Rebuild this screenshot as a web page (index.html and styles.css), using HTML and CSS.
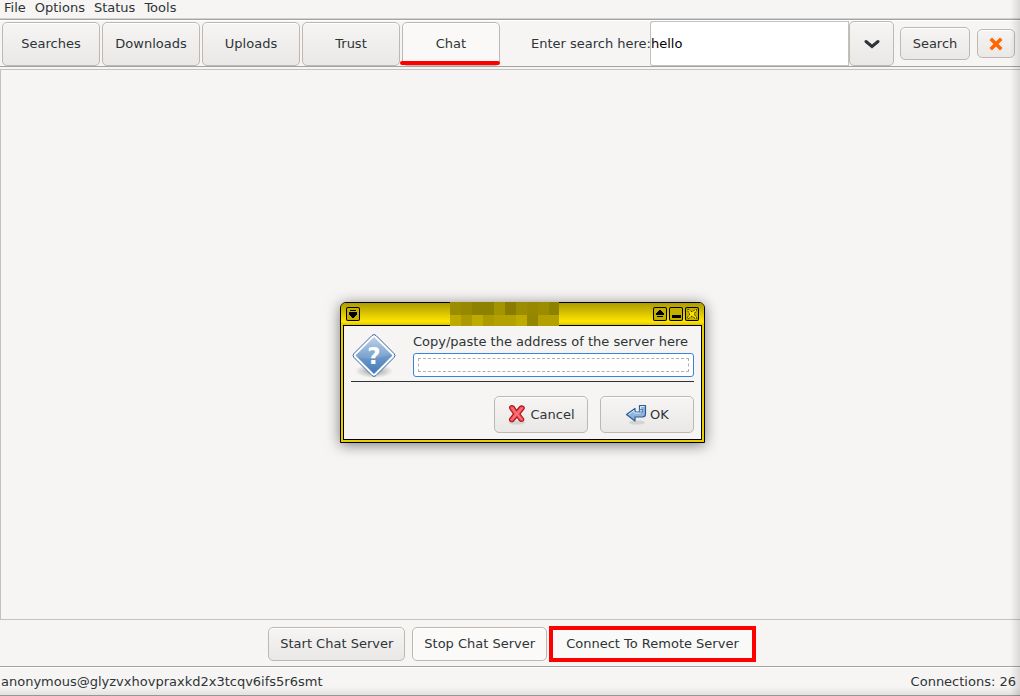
FILE: index.html
```html
<!DOCTYPE html>
<html lang="en">
<head>
<meta charset="utf-8">
<title>Chat</title>
<link rel="stylesheet" href="styles.css">
</head>
<body>
<div class="app">
  <nav class="menubar">
    <button class="menu">File</button>
    <button class="menu">Options</button>
    <button class="menu">Status</button>
    <button class="menu">Tools</button>
  </nav>
  <header class="toolbar">
    <div class="tabs">
      <button class="btn tab">Searches</button>
      <button class="btn tab">Downloads</button>
      <button class="btn tab">Uploads</button>
      <button class="btn tab">Trust</button>
      <button class="btn tab active">Chat</button>
    </div>
    <div class="search">
      <label for="query">Enter search here:</label>
      <input class="query" id="query" type="text" value="hello">
      <button class="btn drop" aria-label="Search history">
        <svg width="16" height="16" viewBox="0 0 16 16"><path d="M2 5.500l6 5 6-5" fill="none" stroke="#2e3436" stroke-width="3" stroke-linecap="round"/></svg>
      </button>
      <button class="btn go">Search</button>
      <button class="btn stop" aria-label="Stop search">
        <svg width="14" height="14" viewBox="0 0 14 14"><path d="M3 3l8 8M11 3l-8 8" stroke="#ff6600" stroke-width="3.600" stroke-linecap="square"/></svg>
      </button>
    </div>
  </header>
  <main class="panel"></main>
  <div class="actions">
    <button class="btn action">Start Chat Server</button>
    <button class="btn action flat">Stop Chat Server</button>
    <button class="btn action marked">Connect To Remote Server</button>
  </div>
  <footer class="statusbar">
    <span>anonymous@glyzvxhovpraxkd2x3tcqv6ifs5r6smt</span>
    <span>Connections: 26</span>
  </footer>

  <div class="dialog" role="dialog" aria-labelledby="prompt">
    <div class="titlebar">
      <button class="win" aria-label="Window menu"><svg width="14" height="14" viewBox="0 0 14 14"><path d="M4 3h6v1H4zM3 5h8v3H3zM4 8h6v1H4zM5 9h4v1H5zM6 10h2v1H6z"/></svg></button>
      <svg class="mosaic" width="109" height="24" viewBox="0 0 109 24" shape-rendering="crispEdges">
        <path d="M0 0h109v13H0z" fill="#978800"/><path d="M0 13h109v11H0z" fill="#b2a100"/>
        <path d="M0 0h11v13H0zM66 0h11v13H66zM88 0h11v13H88z" fill="#9b8c00"/>
        <path d="M22 0h22v13H22zM99 0h10v13H99z" fill="#8f8100"/>
        <path d="M44 0h11v13H44z" fill="#a39400"/><path d="M55 0h11v13H55z" fill="#8a7c00"/>
        <path d="M11 13h11v11H11zM33 13h11v11H33z" fill="#ab9a00"/><path d="M0 13h11v11H0zM22 13h11v11H22zM66 13h11v11H66z" fill="#bdab00"/>
        <path d="M77 13h11v11H77z" fill="#958600"/>
      </svg>
      <div class="wins">
        <button class="win" aria-label="Shade"><svg width="14" height="14" viewBox="0 0 14 14"><path d="M6 3h2v1H6zM5 4h4v1H5zM4 5h6v1H4zM3 6h8v2H3zM4 9h6v1H4z"/></svg></button>
        <button class="win" aria-label="Minimize"><svg width="14" height="14" viewBox="0 0 14 14"><path d="M3 8h9v3H3z"/></svg></button>
        <button class="win" aria-label="Close"><svg width="14" height="14" viewBox="0 0 14 14"><path d="M3 2l4 3 4-3 1 1-3 4 3 4-1 1-4-3-4 3-1-1 3-4-3-4z" fill="#ffe500" stroke="#000" stroke-width="1" stroke-dasharray="1 1"/></svg></button>
      </div>
    </div>
    <div class="body">
      <div class="question">
        <svg width="44" height="46" viewBox="0 1 44 46">
          <defs>
            <linearGradient id="blue" x1="0" y1="0" x2="0" y2="1"><stop offset="0" stop-color="#b4cbe5"/><stop offset=".5" stop-color="#6f9acb"/><stop offset="1" stop-color="#4479b7"/></linearGradient>
            <radialGradient id="shade"><stop offset="0" stop-color="#999"/><stop offset="1" stop-color="#999" stop-opacity="0"/></radialGradient>
          </defs>
          <ellipse cx="22" cy="38" rx="19" ry="7" fill="url(#shade)"/>
          <path d="M20 2.500q2-2 4 0L42 20.500q2 2 0 4L24 42.500q-2 2-4 0L2 24.500q-2-2 0-4z" fill="#fff" stroke="#3465a4" stroke-width="1"/>
          <path d="M22 4L40.500 22.500 22 41 3.500 22.500z" fill="url(#blue)"/>
          <path d="M5 24Q22 28 39 21L22 4 3.500 22.500z" fill="#fff" opacity=".12"/>
          <text class="mark" x="22" y="31" text-anchor="middle">?</text>
        </svg>
        <div class="field">
          <label id="prompt" for="address">Copy/paste the address of the server here</label>
          <div class="address-frame"><input class="address" id="address" type="text"></div>
        </div>
      </div>
      <div class="buttons">
        <button class="btn reply">
          <svg width="20" height="22" viewBox="0 0 20 22"><ellipse cx="10" cy="18.500" rx="8" ry="2" fill="#aaa" opacity=".35"/><path d="M3.500 2Q5 1 7 2.500L9.500 6.500l3.500-4Q14.500 1 17 3q.8 1-.2 2.200L13 10l3.500 4.500q.8 1.500-.5 2.500-2 1-3.500-.5L10 13l-3.500 4Q5 18.500 3 17q-1-1-.2-2.500L6.500 10 3 5Q2 3 3.500 2z" fill="#f35c62" stroke="#b3121b" stroke-width="1.200"/><path d="M5 4l9.500 11.500M15 4L5 15.500" stroke="#ff8585" stroke-width="1" fill="none"/></svg>
          Cancel
        </button>
        <button class="btn reply">
          <svg width="22" height="22" viewBox="0 0 22 22"><ellipse cx="12" cy="18.500" rx="8" ry="2" fill="#aaa" opacity=".35"/><path d="M14.500 1.500h6v8.500q0 3-3 3h-7.500v4L1.500 10.500l8.500-6v3.500h4.500z" fill="#8fb4dc" stroke="#2b5c98" stroke-width="1.200" stroke-linejoin="round"/><path d="M3.500 10.500l5.500-4v2.500h6.500V2.500h4" fill="none" stroke="#dbe8f6" stroke-width="1"/><path d="M14.500 5.500h3v2.500h-3z" fill="#c5d8ed" stroke="#3f70ab" stroke-width=".8"/></svg>
          OK
        </button>
      </div>
    </div>
  </div>
</div>
</body>
</html>
```
FILE: styles.css
```css
* { box-sizing: border-box; }
body { margin: 0; }
button, input { font: inherit; color: inherit; margin: 0; }
svg { display: block; flex: none; }
.app {
  position: relative;
  display: flex;
  flex-direction: column;
  min-height: 100vh;
  overflow: hidden;
  background: #f6f5f4;
  color: #2e3436;
  font: 13px/16px "DejaVu Sans", sans-serif;
}
.app::after {
  content: "";
  position: absolute;
  inset: 0 0 0 auto;
  width: 10px;
  background: linear-gradient(to right, transparent, rgba(0, 0, 0, .12));
  pointer-events: none;
}
.menubar {
  display: flex;
  gap: 9px;
  padding: 0 4px 3px;
  height: 20px;
  border-bottom: 1px solid #a3a3a3;
  box-shadow: inset 0 -1px #d4d2d0;
}
.menu { border: 0; padding: 0; background: none; }
.btn {
  display: flex;
  align-items: center;
  justify-content: center;
  padding: 0;
  border: 1px solid #bfb8b1;
  border-radius: 5px;
  background: linear-gradient(#f6f5f4, #e9e8e7);
  box-shadow: inset 0 1px #fff;
  white-space: nowrap;
}
.toolbar {
  display: flex;
  justify-content: space-between;
  align-items: flex-end;
  height: 47px;
  padding: 1px 5px 0 2px;
  border-bottom: 1px solid #a3a3a3;
  box-shadow: inset 0 1px #fff;
}
.tabs { display: flex; gap: 2px; }
.tab { width: 98px; height: 44px; }
.active { position: relative; background: #faf9f8; }
.active::after {
  content: "";
  position: absolute;
  left: -3px;
  right: -1px;
  bottom: 0;
  height: 4px;
  border-radius: 2px;
  background: #f00;
}
.search { display: flex; align-items: center; }
.query {
  width: 198px;
  height: 45px;
  padding: 0;
  border: 1px solid #c4c0bc;
  border-left-width: 0;
  box-shadow: -1px 0 #c4c0bc;
  border-radius: 3px 0 0 3px;
  background: #fff;
  color: #000;
}
.drop { width: 45px; height: 45px; margin-right: 6px; }
.go { width: 70px; height: 33px; margin-right: 7px; }
.stop { width: 38px; height: 29px; }
.panel {
  flex: 1;
  margin-top: 2px;
  border: 1px solid #c4c2bf;
  border-right: 0;
}
.actions {
  display: flex;
  justify-content: center;
  align-items: center;
  gap: 7px;
  padding: 6px 0 4px 4px;
}
.action { height: 34px; padding: 0 11px; }
.flat { background: #fbfaf9; }
.marked {
  height: 36px;
  margin-left: -5px;
  padding: 0 13px;
  border: 4px solid #f00;
  border-radius: 0;
  background: #f9f9f8;
}
.statusbar {
  display: flex;
  justify-content: space-between;
  align-items: center;
  height: 30px;
  padding: 1px 4px 0 1px;
  border-top: 1px solid #a3a3a3;
  border-bottom: 1px solid #969696;
  background: linear-gradient(#f6f5f4 70%, #e2e1e0);
  box-shadow: inset 0 1px #fff;
}
.dialog {
  position: absolute;
  left: 340px;
  top: 302px;
  width: 365px;
  padding: 0 2px 2px;
  border: 1px solid #000;
  border-radius: 6px 6px 0 0;
  background: #e8d000;
  box-shadow: 0 2px 14px rgba(0, 0, 0, .5);
}
.titlebar {
  position: relative;
  display: flex;
  justify-content: space-between;
  align-items: center;
  height: 22px;
  margin: 0 -2px;
  padding: 0 5px;
  border-radius: 5px 5px 0 0;
  background: linear-gradient(#ad9b00, #ffe600 85%, #d9c300);
}
.mosaic { position: absolute; left: 109px; top: -1px; }
.wins { display: flex; gap: 2px; }
.win {
  width: 14px;
  height: 14px;
  padding: 0;
  border: 0;
  border-radius: 2px;
  background: #c4b000;
  box-shadow: inset 0 0 0 1px #000;
}
.body {
  display: flex;
  flex-direction: column;
  border: 1px solid #000;
  padding: 8px 7px 6px;
  background: #f6f5f4;
}
.question {
  display: flex;
  gap: 17px;
  padding: 0 0 1px 1px;
  border-bottom: 1px solid #2e3436;
}
.field { flex: 1; display: flex; flex-direction: column; gap: 3px; }
.address-frame {
  display: flex;
  height: 24px;
  padding: 4px;
  border: 1px solid #3584e4;
  border-radius: 3px;
  background: #fff;
}
.address { flex: 1; min-width: 0; padding: 0; border: 1px dashed #b0b0b0; background: #fff; outline: 0; }
.mark { font: bold 23px "DejaVu Sans", sans-serif; fill: #fff; }
.buttons { display: flex; justify-content: flex-end; gap: 12px; padding-top: 14px; }
.reply { width: 94px; height: 37px; gap: 3px; }
```
